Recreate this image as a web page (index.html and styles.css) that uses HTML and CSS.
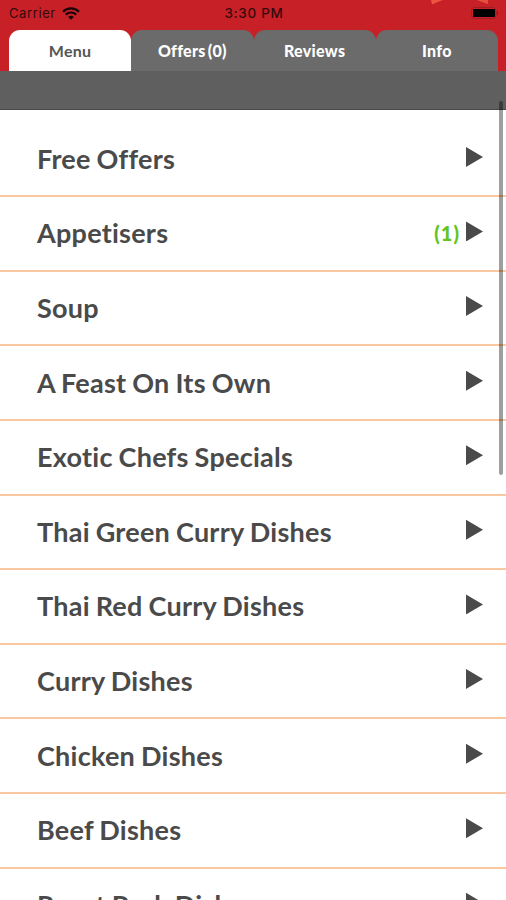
FILE: index.html
```html
<!DOCTYPE html>
<html>
  <head>
    <meta charset="utf-8">
    <title>Menu</title>
    <meta name="viewport" content="width=device-width, initial-scale=1">
    <link rel="stylesheet" href="styles.css">
  </head>

  <body>
    <header class="header">
      <div class="status">
        <div class="status-left">
          <span>Carrier</span>
          <svg class="wifi" viewBox="0 0 18 13" width="18" height="13">
            <path d="M1 4.7a11.5 11.5 0 0 1 16 0M3.8 7.6a7.5 7.5 0 0 1 10.4 0" fill="none" stroke="#160507" stroke-width="2.2"/>
            <path d="M9 12.8L6.2 10a4 4 0 0 1 5.6 0z" fill="#160507"/>
          </svg>
        </div>
        <span class="time">3:30 PM</span>
        <div class="status-right">
          <svg class="battery" viewBox="0 0 28 12" width="28" height="12">
            <rect x="0.5" y="0.5" width="24.5" height="11" rx="3" fill="none" stroke="#a01d22"/>
            <rect x="2" y="2" width="22" height="8" rx="1" fill="#000"/>
            <path d="M26 4q2 2 0 4z" fill="#6d1519"/>
          </svg>
        </div>
        <svg class="photo" viewBox="0 0 60 5" width="60" height="5">
          <path d="M0 0h12q-4 1-11 4.5z" fill="#ee5540"/>
          <path d="M46 0h11v4q-3-1-11-4z" fill="#e5503c"/>
        </svg>
      </div>
      <nav class="tabs">
        <a class="tab active">Menu</a>
        <a class="tab">Offers (0)</a>
        <a class="tab">Reviews</a>
        <a class="tab">Info</a>
      </nav>
    </header>
    <div class="bar"></div>
    <main class="list">
      <div class="item"><span class="name">Free Offers</span><i class="arrow"></i></div>
      <div class="item"><span class="name">Appetisers</span><span class="count">(1)</span><i class="arrow"></i></div>
      <div class="item"><span class="name">Soup</span><i class="arrow"></i></div>
      <div class="item"><span class="name">A Feast On Its Own</span><i class="arrow"></i></div>
      <div class="item"><span class="name">Exotic Chefs Specials</span><i class="arrow"></i></div>
      <div class="item"><span class="name">Thai Green Curry Dishes</span><i class="arrow"></i></div>
      <div class="item"><span class="name">Thai Red Curry Dishes</span><i class="arrow"></i></div>
      <div class="item"><span class="name">Curry Dishes</span><i class="arrow"></i></div>
      <div class="item"><span class="name">Chicken Dishes</span><i class="arrow"></i></div>
      <div class="item"><span class="name">Beef Dishes</span><i class="arrow"></i></div>
      <div class="item"><span class="name">Roast Pork Dishes</span><i class="arrow"></i></div>
    </main>
    <div class="scrollbar"></div>
  </body>
</html>
```

FILE: styles.css
```css
* {
  box-sizing: border-box;
}

body {
  position: relative;
  height: 900px;
  margin: 0;
  overflow: hidden;
  background: #fff;
  color: #4a4a4a;
  font-family: Lato, sans-serif;
}

.header {
  height: 71px;
  background: #c82027;
}

.status {
  position: relative;
  display: grid;
  grid-template-columns: 1fr auto 1fr;
  align-items: center;
  height: 30px;
  padding: 0 7px 4px 9px;
  color: #350a0c;
  font-family: Inter, sans-serif;
  font-size: 13px;
  letter-spacing: 0.6px;
}

.status-left {
  display: flex;
  align-items: center;
  gap: 6px;
}

.status-right {
  display: flex;
  justify-content: flex-end;
}

.time {
  font-size: 13.5px;
  font-weight: 500;
  letter-spacing: 0.7px;
}

.photo {
  position: absolute;
  top: 0;
  right: 15px;
}

.tabs {
  display: flex;
  height: 41px;
  padding: 0 8px 0 9px;
}

.tab {
  flex: 1;
  border-radius: 11px 11px 0 0;
  background: #6b6b6c;
  color: #fff;
  font-size: 16px;
  font-weight: 900;
  letter-spacing: 0.3px;
  line-height: 41px;
  text-align: center;
  word-spacing: -2px;
}

.tab.active {
  background: #fff;
  color: #555;
  font-weight: 700;
}

.bar {
  height: 39px;
  border-bottom: 1px solid #484848;
  background: #5f5f5f;
}

.list {
  padding-top: 12.6px;
}

.item {
  display: flex;
  align-items: center;
  height: 74.6px;
  padding: 0 23px 0 37px;
  border-bottom: 2px solid #fac79f;
}

.name {
  flex: 1;
  padding-bottom: 1px;
  font-size: 27px;
  font-weight: 700;
  letter-spacing: 0.25px;
  word-spacing: -0.9px;
}

.count {
  margin-right: 6px;
  color: #62c41c;
  font-size: 20px;
  font-weight: 900;
  letter-spacing: 1px;
}

.arrow {
  width: 17px;
  height: 20px;
  margin-bottom: 4px;
  background: #4a4a4a;
  clip-path: polygon(0 0, 100% 50%, 0 100%);
}

.scrollbar {
  position: absolute;
  top: 101px;
  right: 3px;
  width: 4px;
  height: 374px;
  border-radius: 2px;
  background: rgba(0, 0, 0, 0.38);
}
```
